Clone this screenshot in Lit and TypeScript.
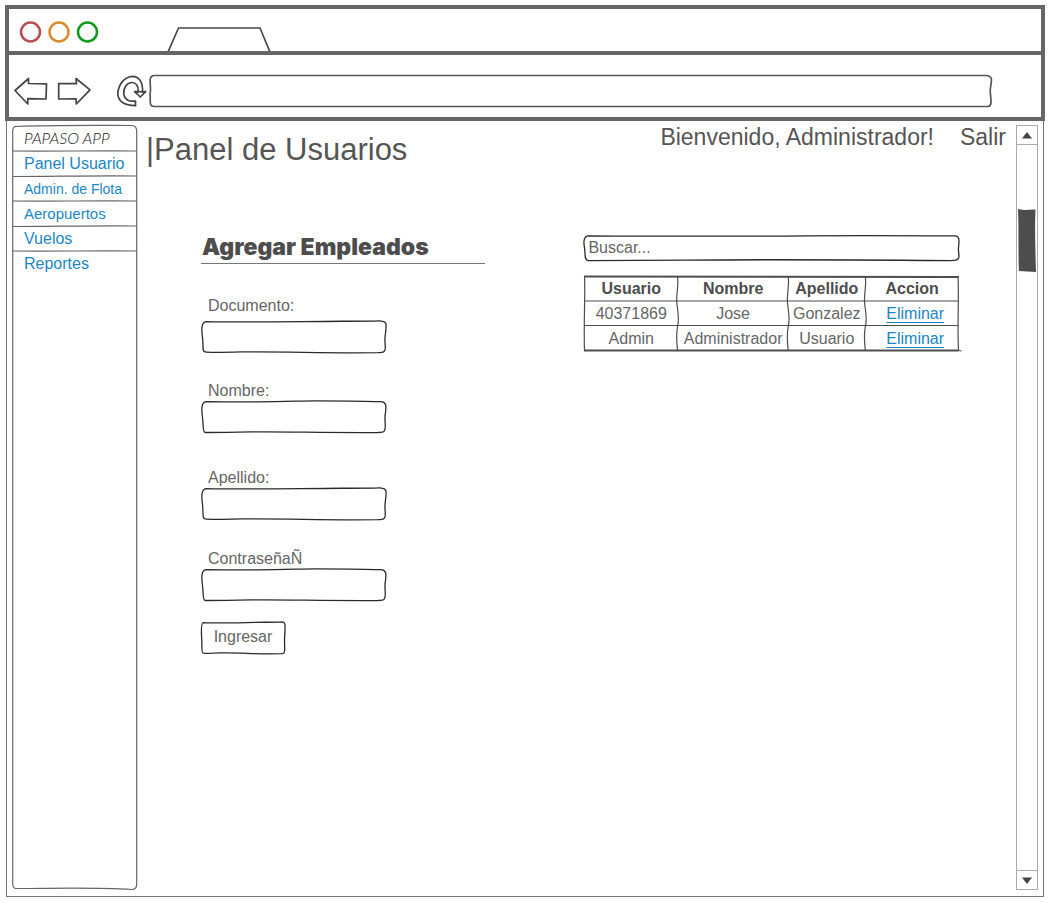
import { LitElement, html, svg, css } from "lit";
import { customElement, property, state } from "lit/decorators.js";

const OUTLINES = [
  "M5 1.5 C40 2.500 90 1.500 140 1.2 S176 .5 179 1 C186 1 184 6 183.500 13 C182 20 184 25 183 29 C182 32 180 31.500 176 31.700 C120 32.500 90 30.500 40 31 C20 31.500 6 31.500 4 31 C1 31 2.500 24 1.500 17 C.5 10 0 2 5 1.500 Z",
  "M5 1.5 C50 2.500 80 1.500 100 1 S170 1.500 179 1.500 C185 2 184 7 183.500 12 C182 19 184 24 183 28 C182.500 32 180 31 176 31.500 C130 32 80 30.500 50 31 C25 31.500 8 31.500 4 31.500 C1.500 31 2.500 24 1.500 17 C.5 10 0 2 5 1.500 Z",
  "M2.500 1 C50 2 80 1.500 110 1 S170 1 182 1.2 C184.200 2 183.700 7 183.600 13 C183 19 184 24 183.600 28 C183.200 31 182 31.500 180 31.500 C130 30.500 80 30 50 31 C25 31.500 8 31.500 2.500 31.500 C.6 31 1.200 24 .8 17 C.3 10 0 2 2.500 1 Z",
];

/** A box with a hand-drawn outline that stretches to the size of its content. */
@customElement("sketch-box")
export class SketchBox extends LitElement {
  static styles = css`
    :host { display: grid; min-width: 0; }
    .outline { grid-area: 1 / 1; width: 100%; height: 100%; min-height: 0; overflow: visible; contain: size; }
    .outline path { fill: #fff; vector-effect: non-scaling-stroke; }
    .content { grid-area: 1 / 1; display: grid; position: relative; min-width: 0; }
  `;
  @property() stroke = "#2a2a2a";
  @property({ type: Number }) weight = 1.3;
  @property({ type: Number }) variant = 0;

  render() {
    return html`
      <svg class="outline" viewBox="0 0 184 32" preserveAspectRatio="none" aria-hidden="true">
        <path d=${OUTLINES[this.variant]} stroke=${this.stroke} stroke-width=${this.weight}></path>
      </svg>
      <div class="content"><slot></slot></div>
    `;
  }
}

@customElement("browser-chrome")
export class BrowserChrome extends LitElement {
  static styles = css`
    :host { display: block; border: 4px solid #666; }
    .titlebar { display: flex; align-items: end; height: 42px; border-bottom: 4px solid #666; }
    .titlebar svg { display: block; }
    .toolbar { display: flex; align-items: center; box-sizing: border-box; height: 62px; padding: 10px 49px 0 5px; }
    button { display: block; padding: 0; border: 0; background: none; }
    button svg { display: block; }
    .forward { margin-left: 9px; }
    .reload { margin: 0 2px 0 25px; }
    .icon { fill: #fff; stroke: #444; stroke-width: 1.7; stroke-linejoin: round; }
    .address { display: grid; flex: 1; min-width: 0; }
    .address svg { grid-area: 1 / 1; width: 100%; height: 34px; overflow: visible; }
    .address path { fill: none; stroke: #555; stroke-width: 1.7; vector-effect: non-scaling-stroke; }
    .address input {
      grid-area: 1 / 1; min-width: 0; margin: 3px 8px; padding: 0; border: 0; outline: 0; background: none;
      font: 16px "Liberation Sans", Arial, sans-serif; color: #555;
    }
  `;
  render() {
    return html`
      <div class="titlebar">
        <svg width="265" height="42" viewBox="9 9 265 42" fill="none" aria-hidden="true">
          <circle cx="30.500" cy="32" r="9.500" stroke="#b94e50" stroke-width="2.500"></circle>
          <circle cx="59" cy="32" r="9.500" stroke="#d98a2b" stroke-width="2.500"></circle>
          <circle cx="87.500" cy="32" r="9.500" stroke="#0f9a1c" stroke-width="2.500"></circle>
          <path d="M168 52 L178.500 28 L260 28 L270 52" stroke="#484848" stroke-width="1.700"></path>
        </svg>
      </div>
      <div class="toolbar">
        <button aria-label="Atrás">
          <svg class="icon" width="34" height="30" viewBox="14 75 34 30">
            <path d="M15 89.500 L28.500 77.500 V82.500 L46.500 82.800 L46 98 L27.800 97.700 L27.800 103 Z"></path>
          </svg>
        </button>
        <button class="forward" aria-label="Adelante">
          <svg class="icon" width="34" height="30" viewBox="57 75 34 30">
            <path d="M58.700 82.700 L76.500 82.700 L76 77.500 L90 88.800 L76.300 103 L76 97.800 L58.700 98 Z"></path>
          </svg>
        </button>
        <button class="reload" aria-label="Recargar">
          <svg class="icon" width="31" height="32" viewBox="116 75 31 32">
            <path d="M135.500 105.700 C125 105.500 118 101.500 117.800 93.500 C118.500 83 125.500 76.600 132.500 76.300 C139.500 76.300 143 82.500 142.500 92 L145.700 91.700 L140.300 97 L134.600 91.700 L138.300 91.800 C138.500 85.500 136 82.300 131.500 82.500 C126.500 83 123.300 88 123.800 94 C124.500 99.500 129 102 135.500 101 Z"></path>
            <path d="M134.600 91.700 L145.700 91.700"></path>
          </svg>
        </button>
        <div class="address">
          <svg viewBox="0 0 842 34" preserveAspectRatio="none" aria-hidden="true">
            <path d="M5 1.500 H836 C844 2 841 8 840.500 14 C839 20 844 32 838 32.500 H6 C-1 33 2 26 1 20 C3 12 -2 2 5 1.500 Z"></path>
          </svg>
          <input type="text" aria-label="Dirección" />
        </div>
      </div>
    `;
  }
}

@customElement("side-menu")
export class SideMenu extends LitElement {
  static styles = css`
    :host { display: grid; width: 126px; flex: none; }
    .outline { grid-area: 1 / 1; width: 100%; height: 100%; contain: size; overflow: visible; }
    .outline path { fill: none; stroke: #666; stroke-width: 1.2; vector-effect: non-scaling-stroke; }
    nav { grid-area: 1 / 1; position: relative; padding: 1px 1px 0 1px; }
    .row { height: 25px; padding: 0 11px; overflow: hidden; line-height: 26px; white-space: nowrap; }
    .brand { font-family: Lato, sans-serif; font-size: 16px; line-height: 23px; font-style: italic; font-weight: 300; color: #222; }
    .rule { display: block; width: 100%; height: 2px; margin: -1px 0; overflow: visible; }
    .rule path { fill: none; stroke: #666; stroke-width: 1.2; vector-effect: non-scaling-stroke; }
    a { display: block; overflow: hidden; font-size: 16px; color: #1c87c4; text-decoration: none; }
    .medium { font-size: 15px; }
    .small { font-size: 14px; }
  `;
  private links = [
    { label: "Panel Usuario", size: "" },
    { label: "Admin. de Flota", size: "small" },
    { label: "Aeropuertos", size: "medium" },
    { label: "Vuelos", size: "" },
    { label: "Reportes", size: "" },
  ];
  render() {
    return html`
      <svg class="outline" viewBox="0 0 126 766" preserveAspectRatio="none" aria-hidden="true">
        <path d="M5 1.500 C40 0 80 .5 120 .5 Q124.700 1 124.700 6 L124.700 760 Q124.700 765.500 120 765.500 C80 763 40 764.500 5 764.500 Q.7 765 .7 760 V6 Q.7 1 5 1.500 Z"></path>
      </svg>
      <nav>
        <div class="row brand">PAPASO APP</div>
        ${this.links.map(
          (link, i) => html`
            <svg class="rule" viewBox="0 0 124 2" preserveAspectRatio="none" aria-hidden="true">
              <path d=${i % 2 ? "M0 1.500 C40 1.500 80 .5 124 1" : "M0 1 C40 1.500 80 .5 124 1"}></path>
            </svg>
            <div class="row"><a class=${link.size} href="#">${link.label}</a></div>
          `
        )}
      </nav>
    `;
  }
}

@customElement("employee-form")
export class EmployeeForm extends LitElement {
  static styles = css`
    :host { display: block; min-width: 0; }
    h2 {
      margin: 0; padding-left: 1px; border-bottom: 1px solid #777;
      font: 900 23px/32px Inter, "Liberation Sans", sans-serif; color: #4d4d4d; white-space: nowrap;
    }
    form { display: grid; justify-items: start; margin: 0; padding-top: 33px; }
    .field { display: grid; width: 185px; margin-bottom: 29px; }
    .first label { padding-bottom: 5px; }
    .wide { margin-bottom: 36px; }
    .narrow { margin-bottom: 30px; }
    .last { margin-bottom: 20px; }
    label { padding-left: 7px; line-height: 18px; }
    sketch-box { height: 33px; }
    input { min-width: 0; height: 31px; padding: 0 8px; border: 0; outline: 0; background: none; font: inherit; color: inherit; }
    .submit { width: 84px; }
    button { height: 32px; padding: 0; border: 0; background: none; font: inherit; color: inherit; }
  `;
  private fields = [
    { id: "documento", label: "Documento:", type: "text", cls: "field first", variant: 0 },
    { id: "nombre", label: "Nombre:", type: "text", cls: "field wide", variant: 1 },
    { id: "apellido", label: "Apellido:", type: "text", cls: "field narrow", variant: 0 },
    { id: "contrasena", label: "ContraseñaÑ", type: "password", cls: "field last", variant: 1 },
  ];
  render() {
    return html`
      <h2>Agregar Empleados</h2>
      <form @submit=${(e: Event) => e.preventDefault()}>
        ${this.fields.map(
          (f) => html`
            <div class=${f.cls}>
              <label for=${f.id}>${f.label}</label>
              <sketch-box .variant=${f.variant}><input id=${f.id} type=${f.type} /></sketch-box>
            </div>
          `
        )}
        <sketch-box class="submit" .variant=${0}><button type="submit">Ingresar</button></sketch-box>
      </form>
    `;
  }
}

@customElement("employee-list")
export class EmployeeList extends LitElement {
  static styles = css`
    :host { display: block; min-width: 0; }
    sketch-box { height: 26px; margin-bottom: 15px; }
    input { min-width: 0; height: 25px; padding: 0 5px; border: 0; outline: 0; background: none; font: inherit; color: inherit; }
    input::placeholder { color: #666; opacity: 1; }
    .grid { display: grid; padding: 0 1px; }
    .lines { grid-area: 1 / 1; width: 100%; height: 100%; contain: size; overflow: visible; }
    .lines path { fill: none; stroke: #4d4d4d; stroke-width: 1.2; vector-effect: non-scaling-stroke; }
    .lines .edge { stroke-width: 1.8; }
    table { grid-area: 1 / 1; position: relative; width: 100%; border-collapse: collapse; table-layout: fixed; text-align: center; }
    th, td { height: 25px; padding: 0; line-height: 20px; white-space: nowrap; }
    th { color: #4d4d4d; }
    .usuario { width: 25%; }
    .nombre { width: 29.4%; }
    .apellido { width: 20.6%; }
    .accion { padding-left: 6px; }
    a { color: #1c87c4; text-underline-offset: 3px; text-decoration-thickness: 1px; }
  `;
  @state() private query = "";
  private rows = [
    ["40371869", "Jose", "Gonzalez"],
    ["Admin", "Administrador", "Usuario"],
  ];
  render() {
    const q = this.query.toLowerCase();
    const rows = this.rows.filter((r) => r.join(" ").toLowerCase().includes(q));
    return html`
      <sketch-box .variant=${2}>
        <input type="search" placeholder="Buscar..." aria-label="Buscar"
          @input=${(e: Event) => (this.query = (e.target as HTMLInputElement).value)} />
      </sketch-box>
      <div class="grid">
        <svg class="lines" viewBox="0 0 374 75" preserveAspectRatio="none" aria-hidden="true">
          <path class="edge" d="M0 .500 C100 1.500 200 1 374 1 M0 74.500 H374"></path>
          <path d="M.500 0 C1.500 20 -.500 45 .500 75 M373.500 0 C374.500 30 372.500 50 374 75 M374 74.500 L377 75"></path>
          ${[93.5, 204, 281].map((x) => svg`<path d=${`M${x} 1 C${x + 1} 10 ${x - 1} 15 ${x - 1} 25 C${x} 36 ${x + 2} 42 ${x} 50 C${x - 2} 60 ${x - 1} 66 ${x} 75`}></path>`)}
          <path d="M0 25 H374 M0 49.500 H374"></path>
        </svg>
        <table>
          <thead>
            <tr>
              <th class="usuario">Usuario</th>
              <th class="nombre">Nombre</th>
              <th class="apellido">Apellido</th>
              <th>Accion</th>
            </tr>
          </thead>
          <tbody>
            ${rows.map(
              (r) => html`<tr>${r.map((c) => html`<td>${c}</td>`)}<td class="accion"><a href="#">Eliminar</a></td></tr>`
            )}
          </tbody>
        </table>
      </div>
    `;
  }
}

@customElement("scroll-rail")
export class ScrollRail extends LitElement {
  static styles = css`
    :host { display: flex; flex-direction: column; flex: none; box-sizing: border-box; width: 22px; border: 1px solid #aaa; }
    button { display: grid; place-items: center; height: 19px; padding: 0; border: 0; background: #fff; }
    .up { border-bottom: 1px solid #aaa; }
    .down { border-top: 1px solid #aaa; }
    .track { flex: 1; padding: 64px 1px 0 1px; }
    .thumb { display: block; width: 100%; height: 63px; }
  `;
  render() {
    return html`
      <button class="up" aria-label="Subir">
        <svg width="10" height="7" viewBox="0 0 10 7"><path d="M0 6.500 L5 0 L10 6.500 Z" fill="#444"></path></svg>
      </button>
      <div class="track">
        <svg class="thumb" viewBox="0 0 19 63" preserveAspectRatio="none" aria-hidden="true">
          <path d="M0 0 L6 1 L18.500 .500 C17.500 20 18.500 45 19 63 L1 62 C0 45 1 20 0 0 Z" fill="#4d4d4d"></path>
        </svg>
      </div>
      <button class="down" aria-label="Bajar">
        <svg width="10" height="7" viewBox="0 0 10 7"><path d="M0 .500 L5 7 L10 .500 Z" fill="#444"></path></svg>
      </button>
    `;
  }
}

@customElement("app-root")
export class AppRoot extends LitElement {
  static styles = css`
    :host {
      display: flex; flex-direction: column; box-sizing: border-box; min-height: 100vh; padding: 5px 4px 6px 5px;
      background: #fff; font: 16px/20px "Liberation Sans", Arial, sans-serif; color: #666;
    }
    .window { display: flex; flex: 1; margin: 0 1px; padding: 4px 5px 6px 5px; border: 1px solid #777; border-top: 0; }
    main { flex: 1; min-width: 0; }
    header { display: flex; justify-content: space-between; padding: 0 10px 0 8px; color: #555; }
    h1 { margin: 0; padding-top: 5px; font-size: 31px; line-height: 40px; font-weight: 400; white-space: nowrap; }
    .session { display: flex; gap: 26px; font-size: 23px; line-height: 25px; white-space: nowrap; }
    .session a { color: inherit; text-decoration: none; }
    .columns { display: grid; grid-template-columns: 284fr 376fr; gap: 98px; padding: 61px 56px 0 63px; }
    employee-list { padding-top: 4px; }
  `;
  render() {
    return html`
      <browser-chrome></browser-chrome>
      <div class="window">
        <side-menu></side-menu>
        <main>
          <header>
            <h1>|Panel de Usuarios</h1>
            <div class="session"><span>Bienvenido, Administrador!</span><a href="#">Salir</a></div>
          </header>
          <div class="columns">
            <employee-form></employee-form>
            <employee-list></employee-list>
          </div>
        </main>
        <scroll-rail></scroll-rail>
      </div>
    `;
  }
}
